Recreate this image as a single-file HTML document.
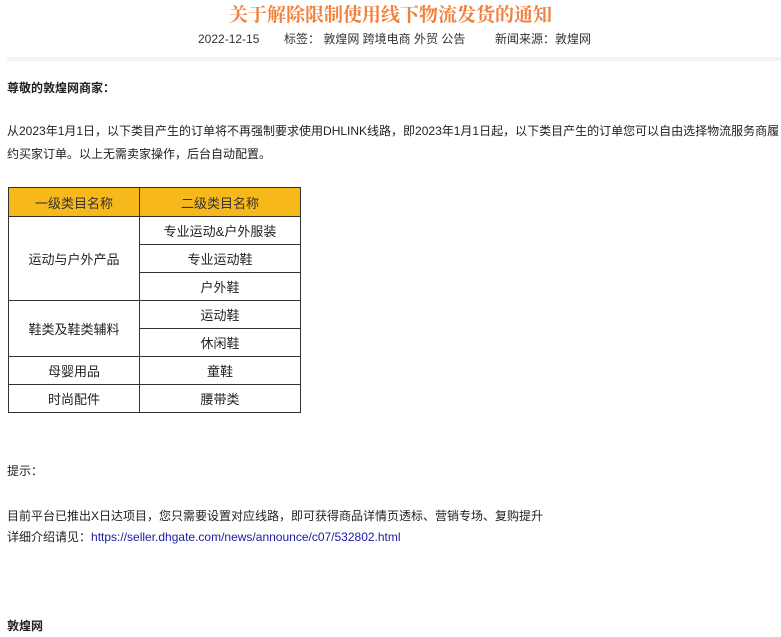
<!DOCTYPE html>
<html><head><meta charset="utf-8"><style>
body{margin:0;width:781px;height:637px;overflow:hidden;background:#fff;font-family:"Liberation Sans","Noto Sans CJK SC",sans-serif;font-size:12px;color:#222;position:relative}
.a{position:absolute;white-space:nowrap;line-height:16px}
h1{position:absolute;left:0;width:781px;top:4px;margin:0;text-align:center;font-family:"Liberation Serif","Noto Serif CJK SC",serif;font-size:19px;font-weight:bold;color:#f2803c;line-height:24px}
table{position:absolute;left:8px;top:187px;border-collapse:collapse;width:293px}
td{border:1px solid #333;text-align:center;height:27px;padding:0;font-size:13px;color:#222}
th{background:#f6b81a;border:1px solid #333;height:26px;font-weight:normal;font-size:13px;color:#333}
</style></head><body>
<h1>关于解除限制使用线下物流发货的通知</h1>
<div class="a" style="left:198px;top:31px;color:#333">2022-12-15</div>
<div class="a" style="left:284px;top:31px;color:#333">标签：&nbsp;敦煌网 跨境电商 外贸 公告</div>
<div class="a" style="left:495px;top:31px;color:#333">新闻来源：敦煌网</div>
<div style="position:absolute;left:7px;right:0;top:57px;height:4px;background:#f2f2f2"></div>
<div class="a" style="left:7px;top:80px;font-weight:bold">尊敬的敦煌网商家：</div>
<div class="a" style="left:7px;top:123px">从2023年1月1日，以下类目产生的订单将不再强制要求使用DHLINK线路，即2023年1月1日起，以下类目产生的订单您可以自由选择物流服务商履</div>
<div class="a" style="left:7px;top:146px">约买家订单。以上无需卖家操作，后台自动配置。</div>
<table>
<tr><th style="width:128px">一级类目名称</th><th>二级类目名称</th></tr>
<tr><td rowspan="3">运动与户外产品</td><td>专业运动&amp;户外服装</td></tr>
<tr><td>专业运动鞋</td></tr>
<tr><td>户外鞋</td></tr>
<tr><td rowspan="2">鞋类及鞋类辅料</td><td>运动鞋</td></tr>
<tr><td>休闲鞋</td></tr>
<tr><td>母婴用品</td><td>童鞋</td></tr>
<tr><td>时尚配件</td><td>腰带类</td></tr>
</table>
<div class="a" style="left:7px;top:463px">提示：</div>
<div class="a" style="left:7px;top:508px">目前平台已推出X日达项目，您只需要设置对应线路，即可获得商品详情页透标、营销专场、复购提升</div>
<div class="a" style="left:7px;top:529px">详细介绍请见：<span style="color:#1a1aa6">https://seller.dhgate.com/news/announce/c07/532802.html</span></div>
<div class="a" style="left:7px;top:618px;font-weight:bold">敦煌网</div>
</body></html>
